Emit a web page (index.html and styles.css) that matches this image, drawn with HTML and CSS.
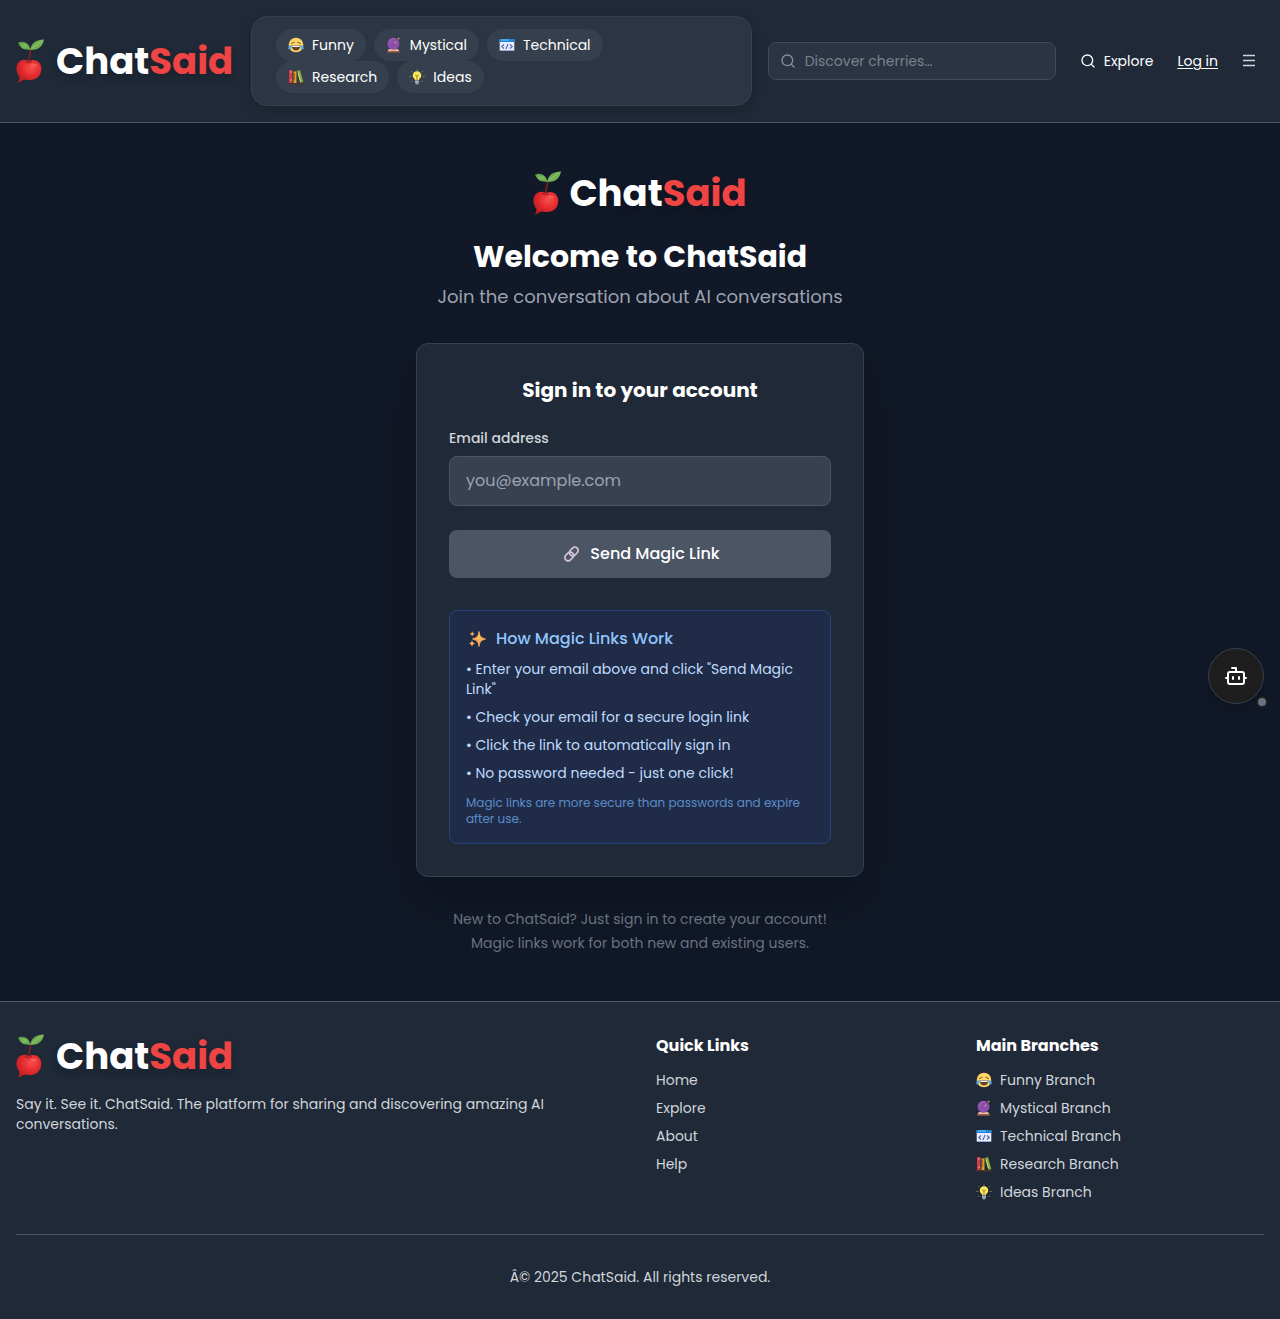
FILE: index.html
```
<!DOCTYPE html>
<html lang="en">
<head>
<meta charset="utf-8">
<meta name="viewport" content="width=device-width, initial-scale=1">
<title>Sign in - ChatSaid</title>
<link rel="stylesheet" href="styles.css">
</head>
<body>
<svg class="sprite" width="0" height="0" aria-hidden="true">
  <defs>
    <radialGradient id="fruit" cx="0.6" cy="0.35" r="0.7"><stop offset="0" stop-color="#f7504c"/><stop offset="0.5" stop-color="#e62c30"/><stop offset="1" stop-color="#b91c20"/></radialGradient>
    <linearGradient id="leaf" x1="0" y1="0" x2="1" y2="1"><stop offset="0" stop-color="#3f8a38"/><stop offset="0.5" stop-color="#7bb85a"/><stop offset="1" stop-color="#4a9440"/></linearGradient>
    <linearGradient id="spark" x1="0" y1="0" x2="0" y2="1"><stop offset="0" stop-color="#ffd84a"/><stop offset="1" stop-color="#ff8a65"/></linearGradient>
  </defs>
  <symbol id="cherry" viewBox="0 0 28 44">
    <path d="M14.500 10.500C14.500 15 13 18 12.500 22" fill="none" stroke="#8f2022" stroke-width="1.500" stroke-linecap="round"/>
    <path d="M2 3.500C7 1.500 13 4 14.500 10.500C8 11.500 4 9 2 3.500Z" fill="url(#leaf)"/>
    <path d="M14.500 10.500C15 4 20 0.500 28 0.500C27 7 22 12 14.500 10.500Z" fill="url(#leaf)"/>
    <path d="M14.500 10.500C18 7 22 4 26 2M14.500 10.500C10 7 7 5 4 4.500" fill="none" stroke="#9acb74" stroke-width="0.600"/>
    <path d="M12.500 22.500C17 19 25.500 21.500 25.300 30C25 38.500 18 42.800 9 40.500C7 41 5.500 42.500 1.800 43.500C3.200 41.500 3.500 40 3.300 37.500C-1.200 32 -0.500 24 5 21.500C8 20.200 11 21 12.500 22.500Z" fill="url(#fruit)"/>
    <path d="M9 22.500Q12.500 25 16 22.500" fill="none" stroke="#9e181c" stroke-width="1"/>
    <ellipse cx="18" cy="26" rx="3.200" ry="1.600" fill="#ff8b83" opacity="0.350"/>
  </symbol>
  <symbol id="funny" viewBox="0 0 16 16">
    <circle cx="8" cy="8" r="7.300" fill="#ffd766"/>
    <path d="M3.300 6.500L6.300 5.200M12.700 6.500L9.700 5.200" stroke="#6d4c28" stroke-width="0.900" stroke-linecap="round"/>
    <path d="M3.500 8.300H12.500C12.300 15.300 3.700 15.300 3.500 8.300Z" fill="#62412d"/>
    <path d="M4.300 8.600H11.700V10H4.300Z" fill="#fff"/>
    <path d="M3.500 8C.8 8.500-.5 10.800.8 12.200C2.200 13.300 3.600 11.800 3.500 8Z" fill="#58a9e8"/>
    <path d="M12.500 8C15.200 8.500 16.500 10.800 15.200 12.200C13.800 13.300 12.400 11.800 12.500 8Z" fill="#58a9e8"/>
  </symbol>
  <symbol id="mystical" viewBox="0 0 16 16">
    <path d="M1 15.500L3 12H11.500L14 15.500Z" fill="#b6806a"/>
    <path d="M.8 14.500H14.400V15.700H.8Z" fill="#70473f"/>
    <path d="M2.500 12.300H12.300L13 14H2Z" fill="#f0bc9a"/>
    <circle cx="7.500" cy="6.800" r="6" fill="#8d4fae"/>
    <path d="M3.500 5.500C4.500 2.500 7 1.500 8.500 1.800" fill="none" stroke="#a767c4" stroke-width="1"/>
    <path d="M12.700 0L13.100 1.300L14.400 1.700L13.100 2.100L12.700 3.400L12.300 2.100L11 1.700L12.300 1.300ZM9.500 4L9.900 5L11 5.500L9.900 6L9.500 7L9.100 6L8 5.500L9.100 5Z" fill="#d99c4e"/>
  </symbol>
  <symbol id="technical" viewBox="0 0 16 16">
    <rect x="0.700" y="2" width="14.600" height="12" rx="0.800" fill="#e9edff"/>
    <path d="M.7 2H15.300V5H.7Z" fill="#1e88d8"/>
    <path d="M2 3H10" stroke="#68c7ff"/>
    <path d="M5 7.500L2.800 9.500L5 11.500M11 7.500L13.200 9.500L11 11.500M9 7L7 12" fill="none" stroke="#4963a6" stroke-width="1.100"/>
    <path d="M1 13.500H15" stroke="#9da9d5"/>
  </symbol>
  <symbol id="research" viewBox="0 0 16 16">
    <path d="M1 1H4.800V14H1Z" fill="#cc3e4b"/>
    <path d="M5.300 2.500H8.800V14H5.300Z" fill="#df9f2d"/>
    <path d="M9 2L12 1L15.300 13L12.300 14Z" fill="#87a747"/>
    <path d="M2 3H4M2 11H4" stroke="#f59a98"/>
    <path d="M6 4V11" stroke="#783d28"/>
    <path d="M10 3.500L12.500 12" stroke="#d3dc70"/>
    <path d="M4.900 1V14M8.900 3V14" stroke="#38352f" stroke-width="0.700"/>
    <path d="M0 14H16V15.500H0Z" fill="#4d302c"/>
  </symbol>
  <symbol id="ideas" viewBox="0 0 16 16">
    <path d="M8 .3V1.800M.3 7.500H2.200M13.800 7.500H15.700M2.200 2L3.500 3.300M13.800 2L12.500 3.300M2.200 13L3.500 11.700M13.800 13L12.500 11.700" stroke="#8f8240" stroke-width="0.900"/>
    <path d="M6.100 11C6.100 9.600 3.700 9 3.700 6.500A4.300 4.300 0 0 1 12.300 6.500C12.300 9 9.900 9.600 9.900 11Z" fill="#fbe95d"/>
    <path d="M6.200 5.800L8 7.200L9.800 5.800M8 7.200V11" fill="none" stroke="#8b7126" stroke-width="0.900"/>
    <path d="M6.100 11.300H9.900V14L9 15.500H7L6.100 14Z" fill="#8e9aa2"/>
    <path d="M6.100 12.800H9.900" stroke="#d0d7db" stroke-width="0.700"/>
  </symbol>
  <symbol id="search" viewBox="0 0 24 24">
    <g fill="none" stroke="currentColor" stroke-width="2" stroke-linecap="round"><circle cx="11" cy="11" r="8"/><path d="M21 21L16.700 16.700"/></g>
  </symbol>
</svg>

<header class="site-header">
  <a class="logo" href="#"><svg class="logo-mark"><use href="#cherry"/></svg><span class="logo-text">Chat<span class="accent">Said</span></span></a>
  <nav class="branches" aria-label="Branches">
    <a class="chip" href="#"><svg class="icon"><use href="#funny"/></svg>Funny</a>
    <a class="chip" href="#"><svg class="icon"><use href="#mystical"/></svg>Mystical</a>
    <a class="chip" href="#"><svg class="icon"><use href="#technical"/></svg>Technical</a>
    <a class="chip" href="#"><svg class="icon"><use href="#research"/></svg>Research</a>
    <a class="chip" href="#"><svg class="icon"><use href="#ideas"/></svg>Ideas</a>
  </nav>
  <form class="search" role="search">
    <svg class="icon"><use href="#search"/></svg>
    <input class="search-input" type="search" aria-label="Search" placeholder="Discover cherries…">
  </form>
  <div class="actions">
    <a class="action" href="#"><svg class="icon"><use href="#search"/></svg>Explore</a>
    <a class="action login" href="#">Log in</a>
    <button class="menu" type="button" aria-label="Menu">
      <svg width="14" height="14" viewBox="0 0 14 14" fill="none" stroke="currentColor" stroke-width="1.300"><path d="M1 1.500H13M1 6.500H13M1 11.500H13"/></svg>
    </button>
  </div>
</header>

<main class="main">
  <a class="logo logo-centered" href="#"><svg class="logo-mark"><use href="#cherry"/></svg><span class="logo-text">Chat<span class="accent">Said</span></span></a>
  <h1 class="title">Welcome to ChatSaid</h1>
  <p class="subtitle">Join the conversation about AI conversations</p>
  <section class="card">
    <h2 class="card-title">Sign in to your account</h2>
    <form class="signin">
      <label class="label" for="email">Email address</label>
      <input class="email" id="email" type="email" placeholder="you@example.com">
      <button class="submit" type="submit">
        <svg class="emoji" viewBox="-2 -1 20 20" fill="none" stroke="#d8c5dc" stroke-width="1.700"><rect x="7" y="3.200" width="9.600" height="6.600" rx="3.300" transform="rotate(-45 11.800 6.500)"/><rect x="2.400" y="8.200" width="9.600" height="6.600" rx="3.300" transform="rotate(-45 7.200 11.500)"/></svg>
        Send Magic Link
      </button>
    </form>
    <div class="info">
      <h3 class="info-title"><svg class="emoji" viewBox="-2 -1 20 20" fill="url(#spark)"><path d="M11 1.500C11.700 6 12.500 7.500 17.500 9C12.500 10.500 11.700 12 11 16.500C10.300 12 9.500 10.500 4.500 9C9.500 7.500 10.300 6 11 1.500Z" stroke="#ffb35c" stroke-width="0.800"/><path d="M4.200 1.500L5 3.200L6.800 4L5 4.800L4.200 6.500L3.400 4.800L1.600 4L3.400 3.200Z"/><path d="M4 10.500L5 12.500L7 13.500L5 14.500L4 16.500L3 14.500L1 13.500L3 12.500Z"/></svg>How Magic Links Work</h3>
      <ul class="steps">
        <li>• Enter your email above and click "Send Magic Link"</li>
        <li>• Check your email for a secure login link</li>
        <li>• Click the link to automatically sign in</li>
        <li>• No password needed - just one click!</li>
      </ul>
      <p class="note">Magic links are more secure than passwords and expire after use.</p>
    </div>
  </section>
  <div class="hint">
    <p>New to ChatSaid? Just sign in to create your account!</p>
    <p>Magic links work for both new and existing users.</p>
  </div>
</main>

<footer class="site-footer">
  <div class="footer-grid">
    <div class="about">
      <a class="logo" href="#"><svg class="logo-mark"><use href="#cherry"/></svg><span class="logo-text">Chat<span class="accent">Said</span></span></a>
      <p class="tagline">Say it. See it. ChatSaid. The platform for sharing and discovering amazing AI conversations.</p>
    </div>
    <nav aria-labelledby="quick-links">
      <h2 class="footer-title" id="quick-links">Quick Links</h2>
      <ul class="links">
        <li><a href="#">Home</a></li>
        <li><a href="#">Explore</a></li>
        <li><a href="#">About</a></li>
        <li><a href="#">Help</a></li>
      </ul>
    </nav>
    <nav aria-labelledby="main-branches">
      <h2 class="footer-title" id="main-branches">Main Branches</h2>
      <ul class="links">
        <li><a href="#"><svg class="icon"><use href="#funny"/></svg>Funny Branch</a></li>
        <li><a href="#"><svg class="icon"><use href="#mystical"/></svg>Mystical Branch</a></li>
        <li><a href="#"><svg class="icon"><use href="#technical"/></svg>Technical Branch</a></li>
        <li><a href="#"><svg class="icon"><use href="#research"/></svg>Research Branch</a></li>
        <li><a href="#"><svg class="icon"><use href="#ideas"/></svg>Ideas Branch</a></li>
      </ul>
    </nav>
  </div>
  <p class="copyright">Â© 2025 ChatSaid. All rights reserved.</p>
</footer>

<button class="bot" type="button" aria-label="Open assistant">
  <svg width="24" height="24" viewBox="0 0 24 24" fill="none" stroke="currentColor" stroke-width="2" stroke-linecap="round" stroke-linejoin="round"><path d="M12 8V4H8"/><rect x="4" y="8" width="16" height="12" rx="2"/><path d="M2 14h2M20 14h2M15 13v2M9 13v2"/></svg>
  <span class="status"></span>
</button>
</body>
</html>
```
FILE: styles.css
```
*, *::before, *::after { box-sizing: border-box; }

body {
  margin: 0;
  position: relative;
  background: #111827;
  color: #fff;
  font-family: Poppins, Inter, "Open Sans", sans-serif;
  font-size: 14px;
  line-height: 20px;
}

h1, h2, h3, p, ul { margin: 0; padding: 0; }
ul { list-style: none; }
a { color: inherit; text-decoration: none; }
button, input { font: inherit; color: inherit; }
svg { flex: none; display: block; }
.sprite { position: absolute; }
.icon { width: 16px; height: 16px; }
.emoji { width: 20px; height: 20px; }

.logo { display: flex; align-items: center; gap: 12px; height: 44px; }
.logo-mark { width: 28px; height: 44px; }
.logo-text {
  font-size: 37px;
  font-weight: 700;
  line-height: 44px;
  text-shadow: 0 4px 8px rgba(0, 0, 0, 0.2);
}
.accent { color: #ef4444; }

.site-header {
  display: grid;
  grid-template-columns: 219px minmax(0, 1fr) 288px auto;
  align-items: center;
  gap: 16px;
  padding: 16px;
  background: #1f2937;
  border-bottom: 1px solid #4b5563;
}
.branches {
  display: flex;
  flex-wrap: wrap;
  column-gap: 8px;
  padding: 12px 128px 12px 24px;
  background: #2c3543;
  border: 1px solid #354050;
  border-radius: 16px;
  box-shadow: 0 4px 12px rgba(0, 0, 0, 0.15);
}
.chip {
  display: flex;
  align-items: center;
  gap: 8px;
  height: 32px;
  padding: 0 12px;
  background: #363f4d;
  border-radius: 16px;
}
.search {
  display: flex;
  align-items: center;
  gap: 9px;
  height: 38px;
  padding: 0 11px;
  background: #2b3442;
  border: 1px solid #414b5a;
  border-radius: 8px;
  color: #87909c;
}
.search-input {
  flex: 1;
  min-width: 0;
  padding: 0;
  background: none;
  border: 0;
}
.search-input::placeholder { color: #7b818a; opacity: 1; }
.actions { display: flex; align-items: center; gap: 24px; padding: 0 8px; }
.action { display: flex; align-items: center; gap: 8px; white-space: nowrap; }
.login { text-decoration: underline; text-underline-offset: 2px; }
.menu { padding: 0; background: none; border: 0; color: #d1d5db; }

.main {
  display: flex;
  flex-direction: column;
  align-items: center;
  padding: 48px 16px;
  text-align: center;
}
.logo-centered { gap: 8px; }
.title { margin-top: 24px; font-size: 30px; line-height: 36px; font-weight: 700; }
.subtitle { margin-top: 8px; font-size: 18px; line-height: 28px; color: #9ca3af; }
.card {
  width: 100%;
  max-width: 448px;
  margin-top: 32px;
  padding: 32px;
  background: #1f2937;
  border: 1px solid #374151;
  border-radius: 12px;
  box-shadow: 0 24px 48px rgba(0, 0, 0, 0.25);
  text-align: left;
}
.card-title { font-size: 20px; line-height: 28px; font-weight: 700; text-align: center; }
.signin { display: flex; flex-direction: column; margin-top: 24px; }
.label { font-weight: 500; color: #d1d5db; }
.email {
  width: 100%;
  height: 50px;
  margin-top: 8px;
  padding: 0 16px 2px;
  background: #374151;
  border: 1px solid #4b5563;
  border-radius: 8px;
  font-size: 16px;
}
.email::placeholder { color: #9ca3af; opacity: 1; }
.submit {
  display: flex;
  align-items: center;
  justify-content: center;
  gap: 10px;
  height: 48px;
  margin-top: 24px;
  background: #4b5563;
  border: 0;
  border-radius: 8px;
  font-size: 16px;
  font-weight: 500;
}
.info {
  margin-top: 32px;
  padding: 16px;
  background: #1f2b47;
  border: 1px solid #24427b;
  border-radius: 8px;
  color: #bfdbfe;
}
.info-title {
  display: flex;
  align-items: center;
  gap: 10px;
  font-size: 16px;
  line-height: 24px;
  font-weight: 500;
  color: #93c5fd;
}
.steps { display: grid; gap: 8px; margin-top: 8px; }
.note { margin-top: 12px; font-size: 12px; line-height: 16px; color: #5b8bc9; }
.hint { display: grid; gap: 4px; margin-top: 32px; color: #6b7280; }

.site-footer { padding: 32px 16px; background: #1f2937; border-top: 1px solid #4b5563; color: #d1d5db; }
.site-footer .logo-text { color: #fff; }
.site-footer .accent { color: #ef4444; }
.footer-grid { display: grid; grid-template-columns: repeat(4, minmax(0, 1fr)); gap: 32px; }
.about { grid-column: span 2; }
.tagline { margin-top: 16px; }
.footer-title { font-size: 16px; line-height: 24px; font-weight: 700; color: #fff; }
.links { display: grid; gap: 8px; margin-top: 12px; }
.links a { display: flex; align-items: center; gap: 8px; }
.copyright { margin-top: 32px; padding-top: 32px; border-top: 1px solid #4b5563; text-align: center; }

/* Floating assistant launcher */
.bot {
  position: absolute;
  top: 648px;
  right: 16px;
  display: grid;
  place-items: center;
  width: 56px;
  height: 56px;
  padding: 0;
  background: #1e1e1e;
  border: 1px solid #374151;
  border-radius: 50%;
  box-shadow: 0 4px 16px rgba(0, 0, 0, 0.2);
}
.status {
  position: absolute;
  right: -5px;
  bottom: -5px;
  width: 12px;
  height: 12px;
  background: #6b7280;
  border: 2px solid #1e1e1e;
  border-radius: 50%;
}
```
